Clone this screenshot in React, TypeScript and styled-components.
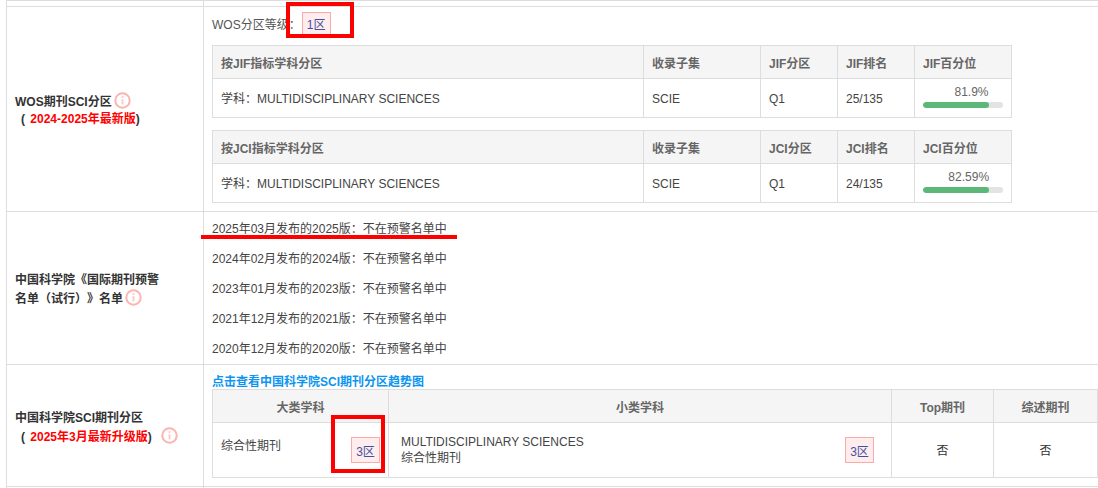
import { createGlobalStyle, styled } from "styled-components"

const GlobalStyle = createGlobalStyle`
  html, body {
    margin: 0;
    padding: 0;
    background: #fff;
    overflow: hidden;
  }
  body {
    font-family: "Liberation Sans", "Noto Sans CJK SC", sans-serif;
    font-size: 12px;
    color: #333;
  }
`

type Metric = {
    name: string,
    category: string,
    rank: string,
    percent: number,
    label: string,
}

const COLON = "\uFF1A"

const metrics: Metric[] = [
    { name: "JIF", category: "Q1", rank: "25/135", percent: 81.9, label: "81.9%" },
    { name: "JCI", category: "Q1", rank: "24/135", percent: 82.59, label: "82.59%" },
]

const warnings = [
    "2025年03月发布的2025版",
    "2024年02月发布的2024版",
    "2023年01月发布的2023版",
    "2021年12月发布的2021版",
    "2020年12月发布的2020版",
]

const InfoIcon = () => (
    <Info viewBox="0 0 17 17" aria-hidden="true">
        <circle cx="8.5" cy="8.5" r="7.2" fill="none" stroke="#fbb4ae" strokeWidth="2" />
        <rect x="7.6" y="7.2" width="1.8" height="5.2" fill="#fcc8c3" />
        <rect x="7.6" y="4.2" width="1.8" height="1.8" fill="#fcc8c3" />
    </Info>
)

const MetricTable = ({ metric }: { metric: Metric }) => (
    <Grid>
        <colgroup>
            <col style={{ width: 431 }} />
            <col style={{ width: 117 }} />
            <col style={{ width: 77 }} />
            <col style={{ width: 77 }} />
            <col style={{ width: 97 }} />
        </colgroup>
        <thead>
            <tr>
                <Th>按{metric.name}指标学科分区</Th>
                <Th>收录子集</Th>
                <Th>{metric.name}分区</Th>
                <Th>{metric.name}排名</Th>
                <Th>{metric.name}百分位</Th>
            </tr>
        </thead>
        <tbody>
            <tr>
                <Td>学科{COLON}MULTIDISCIPLINARY SCIENCES</Td>
                <Td>SCIE</Td>
                <Td>{metric.category}</Td>
                <Td>{metric.rank}</Td>
                <Td>
                    <Meter>
                        <Percent style={{ width: `${metric.percent}%` }}>{metric.label}</Percent>
                        <Track>
                            <Fill style={{ width: `${metric.percent}%` }} />
                        </Track>
                    </Meter>
                </Td>
            </tr>
        </tbody>
    </Grid>
)

export default function App() {
    return (
        <>
            <GlobalStyle />
            <Page>
                <Outer>
                    <tbody>
                        <StubRow>
                            <LabelCell />
                            <ContentCell />
                        </StubRow>
                        <tr>
                            <LabelCell>
                                <Label $top={2}>
                                    WOS期刊SCI分区<InfoIcon />
                                    <br />
                                    <Paren>( <Red>2024-2025年最新版</Red>)</Paren>
                                </Label>
                            </LabelCell>
                            <ContentCell>
                                <WosSection>
                                    <WosLine>
                                        WOS分区等级{COLON}<Zone>1区</Zone>
                                    </WosLine>
                                    {metrics.map((m) => (
                                        <MetricTable key={m.name} metric={m} />
                                    ))}
                                </WosSection>
                            </ContentCell>
                        </tr>
                        <tr>
                            <LabelCell>
                                <Label $top={4}>
                                    中国科学院《国际期刊预警
                                    <br />
                                    名单{"\uFF08"}试行{"\uFF09"}》名单<InfoIcon />
                                </Label>
                            </LabelCell>
                            <ContentCell>
                                <WarningList>
                                    {warnings.map((w) => (
                                        <WarningItem key={w}>{w}{COLON}不在预警名单中</WarningItem>
                                    ))}
                                </WarningList>
                            </ContentCell>
                        </tr>
                        <tr>
                            <LabelCell>
                                <Label $wide $top={3}>
                                    中国科学院SCI期刊分区
                                    <br />
                                    <Paren>( <Red>2025年3月最新升级版</Red>)</Paren>
                                    <WideInfo><InfoIcon /></WideInfo>
                                </Label>
                            </LabelCell>
                            <ContentCell>
                                <CasSection>
                                    <TrendLink href="#">点击查看中国科学院SCI期刊分区趋势图</TrendLink>
                                    <CasGrid>
                                        <colgroup>
                                            <col style={{ width: 176 }} />
                                            <col style={{ width: 503 }} />
                                            <col style={{ width: 102 }} />
                                            <col style={{ width: 104 }} />
                                        </colgroup>
                                        <thead>
                                            <tr>
                                                <Th $center>大类学科</Th>
                                                <Th $center>小类学科</Th>
                                                <Th $center>Top期刊</Th>
                                                <Th $center>综述期刊</Th>
                                            </tr>
                                        </thead>
                                        <tbody>
                                            <tr>
                                                <CasTd>
                                                    <SubjectRow>
                                                        <BigSubject>综合性期刊</BigSubject>
                                                        <Zone $tall>3区</Zone>
                                                    </SubjectRow>
                                                </CasTd>
                                                <CasTd>
                                                    <SubjectRow>
                                                        <SmallSubject>
                                                            MULTIDISCIPLINARY SCIENCES
                                                            <br />
                                                            综合性期刊
                                                        </SmallSubject>
                                                        <Zone $tall>3区</Zone>
                                                    </SubjectRow>
                                                </CasTd>
                                                <CasTd $center>否</CasTd>
                                                <CasTd $center>否</CasTd>
                                            </tr>
                                        </tbody>
                                    </CasGrid>
                                </CasSection>
                            </ContentCell>
                        </tr>
                        <StubRow>
                            <LabelCell />
                            <ContentCell />
                        </StubRow>
                    </tbody>
                </Outer>
                <Mark $x={286} $y={2} $w={68} $h={36} />
                <Underline />
                <Mark $x={331} $y={415} $w={54} $h={58} />
            </Page>
        </>
    )
}

const Page = styled.div`
    position: relative;
    width: 1098px;
    height: 488px;
    padding-left: 6px;
    box-sizing: border-box;
    overflow: hidden;
`

const Outer = styled.table`
    width: 1100px;
    table-layout: fixed;
    border-collapse: collapse;
`

const StubRow = styled.tr`
    height: 5px;
    & > td {
        padding: 0;
        height: 5px;
    }
`

const LabelCell = styled.td`
    width: 197px;
    box-sizing: border-box;
    border: 1px solid #ddd;
    padding: 0 8px;
    vertical-align: middle;
`

const ContentCell = styled.td`
    border: 1px solid #ddd;
    padding: 0;
    vertical-align: top;
`

const Label = styled.div<{ $wide?: boolean, $top: number }>`
    padding-top: ${(p) => p.$top}px;
    font-weight: bold;
    line-height: ${(p) => (p.$wide ? 18 : 17)}px;
    color: #333;
    text-spacing-trim: space-all;
`

const Paren = styled.span`
    padding-left: 6px;
`

const Red = styled.span`
    color: #f00;
    padding-left: 2px;
`

const Info = styled.svg`
    width: 17px;
    height: 17px;
    margin-left: 2px;
    vertical-align: -3px;
`

const WideInfo = styled.span`
    margin-left: 7px;
`

const WosSection = styled.div`
    height: 204px;
    box-sizing: border-box;
    padding: 0 8px;
`

const WosLine = styled.div`
    display: flex;
    align-items: center;
    height: 38px;
    box-sizing: border-box;
    padding-bottom: 5px;
    color: #555;
`

const Zone = styled.span<{ $tall?: boolean }>`
    display: inline-flex;
    align-items: center;
    justify-content: center;
    width: 29px;
    height: ${(p) => (p.$tall ? 26 : 23)}px;
    box-sizing: border-box;
    margin-left: ${(p) => (p.$tall ? 0 : 1)}px;
    background: #ffecec;
    border: 1px solid #f9abab;
    color: #3f51a5;
    flex-shrink: 0;
`

const Grid = styled.table`
    width: 799px;
    table-layout: fixed;
    border-collapse: collapse;
    margin-bottom: 12px;
`

const Th = styled.th<{ $center?: boolean }>`
    height: 33px;
    padding: 0 8px;
    box-sizing: border-box;
    border: 1px solid #ddd;
    background: #f5f5f5;
    color: #666;
    font-weight: bold;
    text-align: ${(p) => (p.$center ? "center" : "left")};
`

const Td = styled.td`
    height: 39px;
    padding: 2px 8px 0;
    box-sizing: border-box;
    border: 1px solid #ddd;
    color: #444;
    line-height: 16px;
`

const Meter = styled.div`
    width: 80px;
    margin-top: -5px;
`

const Percent = styled.div`
    text-align: right;
    color: #666;
    line-height: 14px;
    white-space: nowrap;
`

const Track = styled.div`
    height: 6px;
    margin-top: 3px;
    border-radius: 3px;
    background: #e3e3e3;
    overflow: hidden;
`

const Fill = styled.div`
    height: 100%;
    border-radius: 3px;
    background: #5cb878;
`

const WarningList = styled.div`
    display: flex;
    flex-direction: column;
    height: 152px;
    padding: 0 8px;
`

const WarningItem = styled.div`
    height: 30px;
    line-height: 34px;
    color: #444;
`

const CasSection = styled.div`
    height: 121px;
    box-sizing: border-box;
    padding: 9px 8px 0;
`

const TrendLink = styled.a`
    display: block;
    height: 15px;
    line-height: 17px;
    color: #0b95f0;
    font-weight: bold;
    text-decoration: none;
`

const CasGrid = styled.table`
    width: 885px;
    table-layout: fixed;
    border-collapse: collapse;
`

const CasTd = styled.td<{ $center?: boolean }>`
    height: 55px;
    padding: 0 17px 0 12px;
    box-sizing: border-box;
    border: 1px solid #ddd;
    color: #444;
    text-align: ${(p) => (p.$center ? "center" : "left")};
    &:first-child {
        padding: 0 8px;
    }
    ${(p) => p.$center && "padding: 0 0 2px; color: #333;"}
`

const SubjectRow = styled.div`
    display: flex;
    justify-content: space-between;
    align-items: center;
`

const BigSubject = styled.div`
    align-self: flex-start;
    line-height: 18px;
`

const SmallSubject = styled.div`
    line-height: 16px;
    margin-top: -1px;
`

const Mark = styled.div<{ $x: number, $y: number, $w: number, $h: number }>`
    position: absolute;
    left: ${(p) => p.$x}px;
    top: ${(p) => p.$y}px;
    width: ${(p) => p.$w}px;
    height: ${(p) => p.$h}px;
    box-sizing: border-box;
    border: 4px solid #f00;
`

const Underline = styled.div`
    position: absolute;
    left: 201px;
    top: 235px;
    width: 256px;
    height: 4px;
    background: #f00;
`
